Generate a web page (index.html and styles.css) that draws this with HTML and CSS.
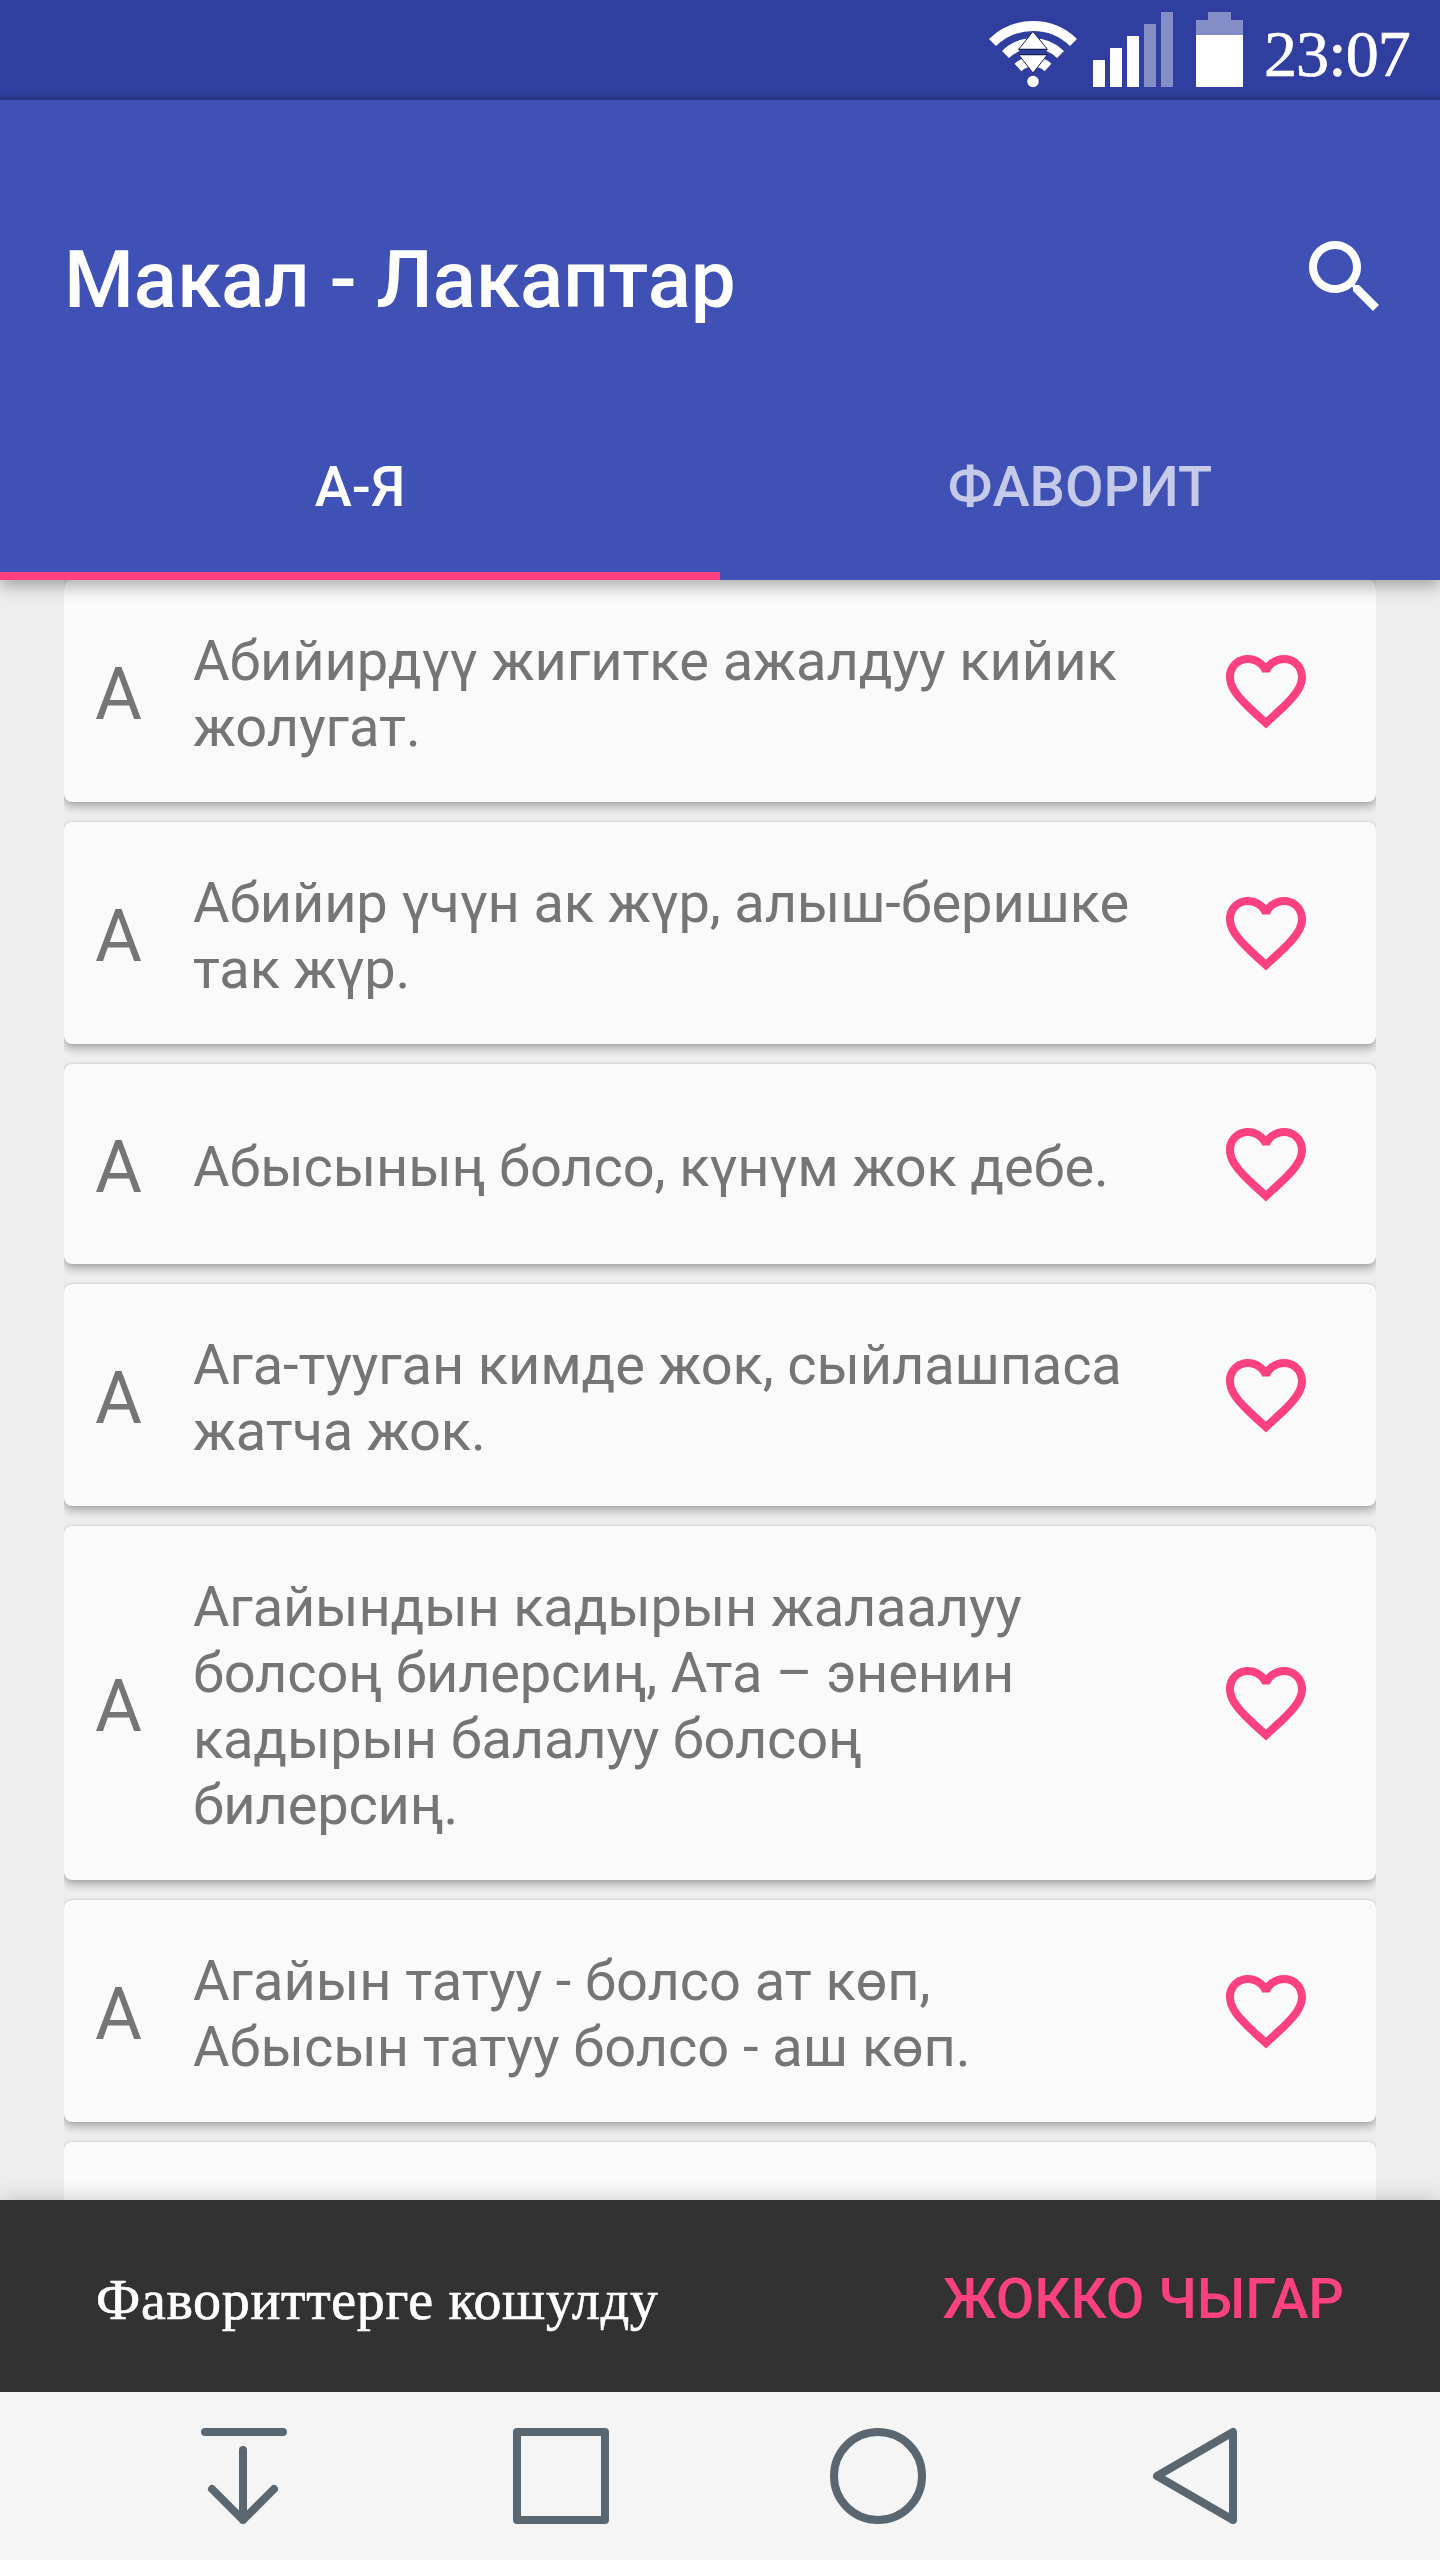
FILE: index.html
```html
<!DOCTYPE html>
<html lang="ky">
<head>
<meta charset="utf-8">
<title>Макал - Лакаптар</title>
<link rel="stylesheet" href="styles.css">
</head>
<body>
<svg class="defs" width="0" height="0">
  <symbol id="heart" viewBox="0 0 24 24"><path d="M16.5 3c-1.74 0-3.41.81-4.5 2.09C10.91 3.81 9.24 3 7.5 3 4.42 3 2 5.42 2 8.5c0 3.78 3.4 6.86 8.55 11.54L12 21.35l1.45-1.32C18.6 15.36 22 12.28 22 8.5 22 5.42 19.58 3 16.5 3zm-4.4 15.55l-.1.1-.1-.1C7.14 14.24 4 11.39 4 8.5 4 6.5 5.5 5 7.5 5c1.54 0 3.04.99 3.57 2.36h1.87C13.46 5.99 14.96 5 16.5 5c2 0 3.5 1.5 3.5 3.5 0 2.89-3.14 5.74-7.9 10.05z"/></symbol>
</svg>
<div class="screen">
  <div class="status">
    <svg class="wifi" width="88" height="68" viewBox="0 0 88 68">
      <g fill="none" stroke="#fff" stroke-width="10">
        <path d="M3.5 22.5A58 58 0 0 1 84.500 22.500"/>
        <path d="M16.500 34.500A39.500 39.500 0 0 1 71.500 34.500"/>
        <path d="M29 47.500A22 22 0 0 1 59 47.500"/>
      </g>
      <path d="M44 11.500L58.500 29.500H29.500zM29.500 34.500H58.500L44 53z" fill="#fff"/>
      <path d="M44 11.500L58.500 29.500H29.500zM29.500 34.500H58.500L44 53z" fill="none" stroke="#1d2960" stroke-width="1"/>
      <path d="M30 29.500H58M30 34.500H58" stroke="#15204f" stroke-width="1.500"/>
      <path d="M30 32H58" stroke="#303f9f" stroke-width="3.500"/>
      <circle cx="44" cy="61.500" r="5.700" fill="#fff"/>
    </svg>
    <svg class="signal" width="80" height="75" viewBox="0 0 80 75" fill="#fff">
      <path d="M0 48h12v27H0zM17 36h12v39H17zM34 24h12v51H34z"/>
      <path d="M51 12h12v63H51zM68 0h12v75H68z" fill="#868ec7"/>
    </svg>
    <svg class="battery" width="47" height="75" viewBox="0 0 47 75">
      <path d="M12 0h23v8h12v15H0V8h12z" fill="#868ec7"/>
      <path d="M0 23h47v52H0z" fill="#fff"/>
    </svg>
    <span class="clock">23:07</span>
  </div>
  <header class="header">
    <div class="toolbar">
      <h1 class="title">Макал - Лакаптар</h1>
      <svg class="search" width="96" height="96" viewBox="0 0 24 24" fill="#fff"><path d="M15.500 14h-.79l-.28-.27C15.410 12.590 16 11.110 16 9.500 16 5.910 13.090 3 9.500 3S3 5.910 3 9.500 5.910 16 9.500 16c1.610 0 3.090-.59 4.230-1.570l.27.28v.79l5 4.990L20.490 19l-4.990-5zm-6 0C7.010 14 5 11.990 5 9.500S7.010 5 9.500 5 14 7.010 14 9.500 11.990 14 9.500 14z"/></svg>
    </div>
    <nav class="tabs">
      <div class="tab active">А-Я</div>
      <div class="tab">ФАВОРИТ</div>
    </nav>
  </header>
  <main class="content">
    <div class="list">
      <article class="card"><span class="letter">А</span><p class="text">Абийирдүү жигитке ажалдуу кийик<br>жолугат.</p><svg class="heart"><use href="#heart"/></svg></article>
      <article class="card"><span class="letter">А</span><p class="text snug">Абийир үчүн ак жүр, алыш-беришке<br>так жүр.</p><svg class="heart"><use href="#heart"/></svg></article>
      <article class="card"><span class="letter">А</span><p class="text snug">Абысының болсо, күнүм жок дебе.</p><svg class="heart"><use href="#heart"/></svg></article>
      <article class="card"><span class="letter">А</span><p class="text snug">Ага-тууган кимде жок, сыйлашпаса<br>жатча жок.</p><svg class="heart"><use href="#heart"/></svg></article>
      <article class="card"><span class="letter">А</span><p class="text tight">Агайындын кадырын жалаалуу<br>болсоң билерсиң, Ата – эненин<br>кадырын балалуу болсоң<br>билерсиң.</p><svg class="heart"><use href="#heart"/></svg></article>
      <article class="card"><span class="letter">А</span><p class="text">Агайын татуу - болсо ат көп,<br>Абысын татуу болсо - аш көп.</p><svg class="heart"><use href="#heart"/></svg></article>
      <article class="card"></article>
    </div>
  </main>
  <div class="snackbar">
    <span class="message">Фавориттерге кошулду</span>
    <span class="action">ЖОККО ЧЫГАР</span>
  </div>
  <nav class="navbar">
    <svg width="96" height="96" viewBox="0 0 96 96"><path d="M10 4H88M48 22V92M17 61L48 92L79 61"/></svg>
    <svg width="96" height="96" viewBox="0 0 96 96"><path d="M4 4H92V92H4z"/></svg>
    <svg width="96" height="96" viewBox="0 0 96 96"><circle cx="47" cy="48" r="44"/></svg>
    <svg width="96" height="96" viewBox="0 0 96 96"><path d="M84 4V92L8 48z"/></svg>
  </nav>
</div>
</body>
</html>
```
FILE: styles.css
```css
* { box-sizing: border-box; }
body { margin: 0; font-family: Roboto, "Noto Sans", sans-serif; background: #eee; }
.defs { display: block; }
.screen { width: 1440px; height: 2560px; display: flex; flex-direction: column; overflow: hidden; }
.status {
  height: 100px; flex: none; display: flex; align-items: flex-start;
  padding: 12px 0 0 989px; color: #fff;
  background: linear-gradient(#303f9f 94px, #283583 100px);
}
.wifi { margin-top: 8px; }
.signal { margin-left: 16px; }
.battery { margin-left: 23px; }
.clock {
  font-family: "Liberation Serif", serif; font-size: 66px; line-height: 76px;
  margin: 4px 0 0 21px; letter-spacing: -0.9px; white-space: nowrap;
  -webkit-text-stroke: 0.7px #fff;
}
.header {
  height: 480px; flex: none; background: #3f51b5; color: #fff;
  position: relative; z-index: 2; box-shadow: 0 6px 16px rgba(0, 0, 0, .32);
  display: flex; flex-direction: column;
}
.toolbar {
  height: 288px; display: flex; align-items: center; justify-content: space-between;
  padding: 71px 47px 0 64px;
}
.title { margin: 0; font-size: 80px; font-weight: 500; line-height: 94px; letter-spacing: -0.1px; white-space: nowrap; }
.search { margin-bottom: 5px; }
.tabs { height: 192px; display: flex; }
.tab {
  flex: 1; text-align: center; font-size: 56px; font-weight: 500; line-height: 66px;
  padding-top: 66px; color: #c5cae9; border-bottom: 8px solid transparent;
}
.tab.active { color: #fff; border-color: #ff4081; }
.content { height: 1620px; flex: none; padding: 0 64px; overflow: hidden; background: #eee; }
.list { height: 100%; overflow: hidden; display: flex; flex-direction: column; gap: 20px; }
.card {
  flex: none; min-height: 200px; display: flex; align-items: center;
  background: #fafafa; border-radius: 8px; padding: 45px 62px 45px 31px;
  box-shadow: 0 5px 9px rgba(0, 0, 0, .28), 0 0 3px rgba(0, 0, 0, .14);
}
.letter { width: 98px; flex: none; font-size: 72px; line-height: 84px; color: #757575; padding-top: 8px; margin: -4px 0; }
.text { margin: -3px 0; flex: 1; font-size: 56px; line-height: 66px; color: #757575; padding-top: 6px; letter-spacing: -0.03px; white-space: nowrap; }
.text.snug { letter-spacing: -0.14px; }
.text.tight { letter-spacing: -0.18px; }
.heart { width: 96px; height: 96px; flex: none; fill: #ff4081; margin: -15px 0; }
.snackbar {
  height: 192px; flex: none; background: #323232; position: relative; z-index: 2;
  display: flex; align-items: center; justify-content: space-between; padding: 0 96px;
  box-shadow: 0 0 20px rgba(0, 0, 0, .2); white-space: nowrap; line-height: 66px; font-size: 56px;
}
.message { font-family: "Liberation Serif", serif; color: #fff; padding-top: 7px; letter-spacing: 0.65px; -webkit-text-stroke: 0.7px #fff; }
.action { color: #ff4081; font-weight: 500; padding-top: 5px; }
.navbar {
  height: 168px; flex: none; background: #f5f5f5; position: relative; z-index: 3;
  display: flex; padding: 36px 195px; justify-content: space-between;
}
.navbar svg { overflow: visible; fill: none; stroke: #5b6770; stroke-width: 8; stroke-linecap: round; stroke-linejoin: round; }
```
